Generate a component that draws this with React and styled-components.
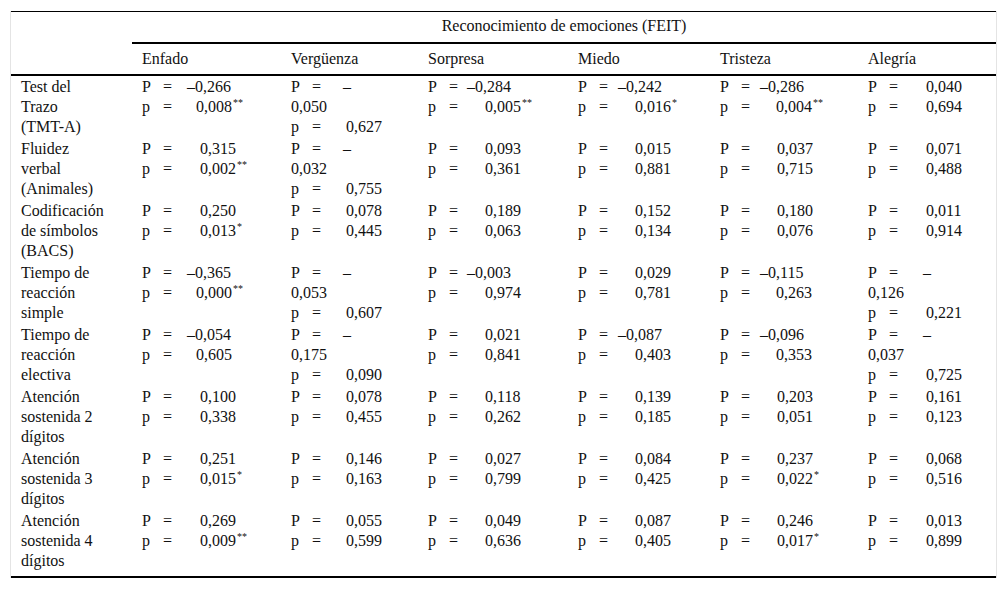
import React from "react";
import styled, { createGlobalStyle } from "styled-components";

const Global = createGlobalStyle`
  html, body {
    margin: 0;
    padding: 0;
    background: #fff;
  }
  body {
    font-family: "Liberation Serif", "Times New Roman", serif;
    font-size: 16px;
    line-height: 20px;
    color: #111;
  }
`;

// marco claro a los lados de la tabla
const Frame = styled.div`
  margin: 11px 0 0 10px;
  width: 985px;
  border-left: 1px solid #e4e4e4;
  border-right: 1px solid #e4e4e4;
`;

const Table = styled.table`
  width: 985px;
  table-layout: fixed;
  border-collapse: separate;
  border-spacing: 0;
  border-top: 1px solid #000;
  border-bottom: 2px solid #000;
`;

const Th = styled.th`
  font-weight: normal;
  text-align: ${(p) => (p.$center ? "center" : "left")};
  padding: ${(p) => (p.$top ? "4px 10px 6px" : "5px 10px 5px")};
  border-bottom: ${(p) => (p.$rule ? "2px solid #000" : "none")};
  vertical-align: top;
  white-space: nowrap;
`;

const Td = styled.td`
  vertical-align: top;
  padding: ${(p) => (p.$last ? "1px 10px 5px" : "1px 10px")};
`;

const Line = styled.div`
  display: flex;
  height: 20px;
  white-space: nowrap;
`;

const Sym = styled.span`
  flex: none;
  width: 21px;
`;

const Eq = styled.span`
  flex: none;
  width: ${(p) => p.$w}px;
`;

const Sup = styled.sup`
  font-size: 10px;
  line-height: 0;
  vertical-align: 0;
  position: relative;
  top: -6px;
  margin-left: 1px;
`;

const emotions = ["Enfado", "Vergüenza", "Sorpresa", "Miedo", "Tristeza", "Alegría"];
const widths = [121, 149, 137, 150, 142, 148, 138];
// posición del valor con guion, por columna
const dashAt = [45, 44, 39, 40, 40, 44];
const plainAt = [58, 55, 57, 57, 57, 58];
// corrimiento de la p cuando la P es negativa
const shift = [4, 0, 0, 0, 1, 0];

const rows = [
  [["Test del", "Trazo", "(TMT-A)"], ["–0,266|0,008**", "~0,050|0,627", "–0,284|0,005**", "–0,242|0,016*", "–0,286|0,004**", "0,040|0,694"]],
  [["Fluidez", "verbal", "(Animales)"], ["0,315|0,002**", "~0,032|0,755", "0,093|0,361", "0,015|0,881", "0,037|0,715", "0,071|0,488"]],
  [["Codificación", "de símbolos", "(BACS)"], ["0,250|0,013*", "0,078|0,445", "0,189|0,063", "0,152|0,134", "0,180|0,076", "0,011|0,914"]],
  [["Tiempo de", "reacción", "simple"], ["–0,365|0,000**", "~0,053|0,607", "–0,003|0,974", "0,029|0,781", "–0,115|0,263", "~0,126|0,221"]],
  [["Tiempo de", "reacción", "electiva"], ["–0,054|0,605", "~0,175|0,090", "0,021|0,841", "–0,087|0,403", "–0,096|0,353", "~0,037|0,725"]],
  [["Atención", "sostenida 2", "dígitos"], ["0,100|0,338", "0,078|0,455", "0,118|0,262", "0,139|0,185", "0,203|0,051", "0,161|0,123"]],
  [["Atención", "sostenida 3", "dígitos"], ["0,251|0,015*", "0,146|0,163", "0,027|0,799", "0,084|0,425", "0,237|0,022*", "0,068|0,516"]],
  [["Atención", "sostenida 4", "dígitos"], ["0,269|0,009**", "0,055|0,599", "0,049|0,636", "0,087|0,405", "0,246|0,017*", "0,013|0,899"]],
];

const split = (v) => {
  const m = v.match(/^(.*?)(\*+)?$/);
  return [m[1], m[2]];
};

const StatLine = ({ sym, value, at }) => {
  const [num, stars] = split(value);
  return (
    <Line>
      <Sym>{sym}</Sym>
      <Eq $w={at - 21}>=</Eq>
      <span>
        {num}
        {stars && <Sup>{stars}</Sup>}
      </span>
    </Line>
  );
};

const Stat = ({ text, col }) => {
  const [big, small] = text.split("|");
  if (big.startsWith("~")) {
    // el valor negativo se corta tras el guion
    return (
      <>
        <StatLine sym="P" value="–" at={plainAt[col] - 3} />
        <Line>{big.slice(1)}</Line>
        <StatLine sym="p" value={small} at={plainAt[col]} />
      </>
    );
  }
  const neg = big.startsWith("–");
  return (
    <>
      <StatLine sym="P" value={big} at={neg ? dashAt[col] : plainAt[col]} />
      <StatLine sym="p" value={small} at={plainAt[col] - (neg ? shift[col] : 0)} />
    </>
  );
};

export default function App() {
  return (
    <>
      <Global />
      <Frame>
        <Table>
          <colgroup>
            {widths.map((w, i) => (
              <col key={i} style={{ width: w }} />
            ))}
          </colgroup>
          <thead>
            <tr>
              <Th $top rowSpan={2} $rule />
              <Th $top $center $rule colSpan={6}>
                Reconocimiento de emociones (FEIT)
              </Th>
            </tr>
            <tr>
              {emotions.map((e) => (
                <Th key={e} $rule>
                  {e}
                </Th>
              ))}
            </tr>
          </thead>
          <tbody>
            {rows.map(([label, cells], r) => {
              const last = r === rows.length - 1;
              return (
                <tr key={label.join(" ")}>
                  <Td $last={last}>
                    {label.map((l) => (
                      <Line key={l}>{l}</Line>
                    ))}
                  </Td>
                  {cells.map((c, i) => (
                    <Td key={i} $last={last}>
                      <Stat text={c} col={i} />
                    </Td>
                  ))}
                </tr>
              );
            })}
          </tbody>
        </Table>
      </Frame>
    </>
  );
}
